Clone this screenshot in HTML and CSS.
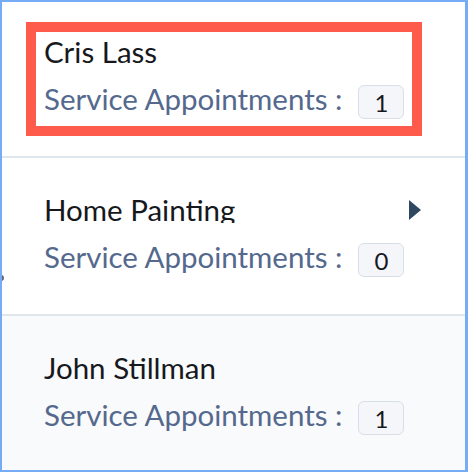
FILE: index.html
```html
<!DOCTYPE html>
<html>
<head>
<meta charset="utf-8">
<link rel="stylesheet" href="styles.css">
</head>
<body>
<div class="panel">
  <div class="row first">
    <div class="content highlighted">
      <div class="name-line"><span class="name">Cris Lass</span></div>
      <div class="meta-line"><span class="label">Service Appointments :</span><span class="badge">1</span></div>
    </div>
  </div>
  <div class="row">
    <div class="content">
      <div class="name-line"><span class="name clip">Home Painting</span>
        <svg class="arrow" width="12" height="20" viewBox="0 0 12 20"><path d="M0 0 L12 10 L0 20 Z" fill="#2f4760"/></svg>
      </div>
      <div class="meta-line"><span class="label">Service Appointments :</span><span class="badge">0</span></div>
    </div>
  </div>
  <div class="row alt">
    <div class="content">
      <div class="name-line"><span class="name">John Stillman</span></div>
      <div class="meta-line"><span class="label">Service Appointments :</span><span class="badge">1</span></div>
    </div>
  </div>
  <span class="nub"></span>
</div>
</body>
</html>
```
FILE: styles.css
```css
html, body {
  margin: 0;
  padding: 0;
  background: #ffffff;
}
body {
  font-family: Lato, "Noto Sans", sans-serif;
}
.panel {
  position: relative;
  width: 468px;
  height: 472px;
  box-sizing: border-box;
  border: 2px solid #76abf6;
  border-right-width: 3px;
  display: flex;
  flex-direction: column;
  overflow: hidden;
}
.row {
  height: 158px;
  flex: none;
  box-sizing: border-box;
  padding: 32px 0 0 34px;
  border-bottom: 2px solid #dfe7ec;
  background: #ffffff;
}
.row.first {
  height: 156px;
}
.row.alt {
  flex: 1;
  border-bottom: none;
  background: #f9fafb;
}
.content {
  width: 385px;
  box-sizing: border-box;
  padding-left: 8px;
}
.content.highlighted {
  width: 376px;
  padding-bottom: 2px;
  outline: 10px solid #fe5b4c;
}
.content.highlighted .name-line {
  margin-top: -2px;
}
.name-line {
  display: flex;
  align-items: flex-start;
  height: 40px;
}
.name {
  display: block;
  font-size: 29.5px;
  line-height: 40px;
  height: 40px;
  color: #16181d;
  white-space: nowrap;
}
.name.clip {
  height: 33px;
  overflow: hidden;
}
.arrow {
  margin-left: auto;
  margin-top: 10px;
  display: block;
}
.meta-line {
  display: flex;
  align-items: center;
  height: 44px;
  margin-top: 8px;
  gap: 16px;
}
.label {
  font-size: 29.5px;
  line-height: 36px;
  margin-bottom: 7px;
  color: #54698d;
  white-space: nowrap;
}
.badge {
  width: 46px;
  height: 34px;
  box-sizing: border-box;
  border: 1.5px solid #d8dfe6;
  border-radius: 6px;
  background: #f4f6f9;
  color: #16181d;
  font-size: 24px;
  display: flex;
  align-items: center;
  justify-content: center;
}
.nub {
  position: absolute;
  left: -2px;
  top: 273px;
  width: 4px;
  height: 6px;
  border-radius: 0 3px 3px 0;
  background: #5a6675;
}
```
